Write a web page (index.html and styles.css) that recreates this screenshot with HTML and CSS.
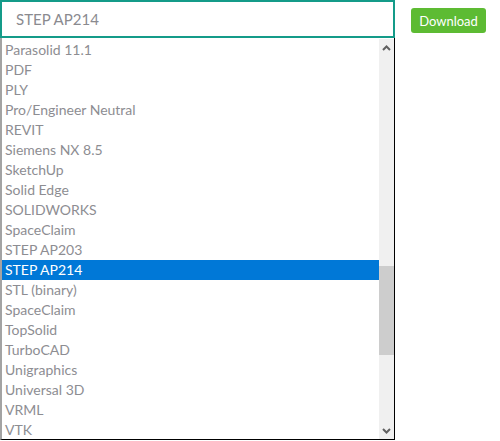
FILE: index.html
```html
<!DOCTYPE html>
<html>
<head>
<meta charset="utf-8">
<link rel="stylesheet" href="styles.css">
</head>
<body>
<div class="wrap">
  <div class="field">
    <div class="input">STEP AP214</div>
    <div class="list">
      <ul class="items">
        <li>Parasolid 11.1</li>
        <li>PDF</li>
        <li>PLY</li>
        <li>Pro/Engineer Neutral</li>
        <li>REVIT</li>
        <li>Siemens NX 8.5</li>
        <li>SketchUp</li>
        <li>Solid Edge</li>
        <li>SOLIDWORKS</li>
        <li>SpaceClaim</li>
        <li>STEP AP203</li>
        <li class="sel">STEP AP214</li>
        <li>STL (binary)</li>
        <li>SpaceClaim</li>
        <li>TopSolid</li>
        <li>TurboCAD</li>
        <li>Unigraphics</li>
        <li>Universal 3D</li>
        <li>VRML</li>
        <li>VTK</li>
      </ul>
      <div class="scrollbar">
        <div class="arrow up"><svg width="9" height="6" viewBox="0 0 9 6"><path d="M1 5 L4.5 1.5 L8 5" fill="none" stroke="#606060" stroke-width="2"/></svg></div>
        <div class="track"><div class="thumb"></div></div>
        <div class="arrow down"><svg width="9" height="6" viewBox="0 0 9 6"><path d="M1 1 L4.5 4.5 L8 1" fill="none" stroke="#606060" stroke-width="2"/></svg></div>
      </div>
    </div>
  </div>
  <button class="btn">Download</button>
</div>
</body>
</html>
```
FILE: styles.css
```css
html, body {
  margin: 0;
  padding: 0;
  background: #fff;
}
body {
  font-family: Lato, "Open Sans", sans-serif;
  width: 500px;
  height: 441px;
  overflow: hidden;
}
.wrap {
  display: flex;
  align-items: flex-start;
}
.field {
  width: 395px;
  display: flex;
  flex-direction: column;
}
.input {
  box-sizing: border-box;
  height: 38px;
  border: 2px solid #149b89;
  padding-left: 14px;
  font-size: 15px;
  line-height: 34px;
  color: #8a8a8f;
}
.list {
  box-sizing: border-box;
  height: 402px;
  display: flex;
  border-left: 2px solid #a3a3a3;
  border-right: 1px solid #000;
  border-bottom: 1px solid #000;
  overflow: hidden;
}
.items {
  list-style: none;
  margin: 0;
  padding: 2px 0 0 0;
  flex: 1;
  overflow: hidden;
}
.items li {
  height: 20px;
  line-height: 20px;
  padding-left: 3px;
  font-size: 14px;
  color: #8d8d92;
  white-space: nowrap;
}
.items li.sel {
  background: #0078d7;
  color: #fff;
}
.scrollbar {
  width: 15px;
  margin-top: 1px;
  background: #f0f0f0;
  display: flex;
  flex-direction: column;
}
.arrow {
  height: 17px;
  display: flex;
  align-items: center;
  justify-content: center;
}
.track {
  flex: 1;
  display: flex;
  flex-direction: column;
  padding-top: 210px;
}
.thumb {
  height: 89px;
  background: #cdcdcd;
}
.btn {
  margin: 8px 0 0 16px;
  width: 75px;
  height: 25px;
  border: none;
  border-radius: 3px;
  background: #5dbb33;
  color: #fff;
  font-family: Lato, "Open Sans", sans-serif;
  font-size: 13px;
  padding: 0;
  cursor: pointer;
}
```
